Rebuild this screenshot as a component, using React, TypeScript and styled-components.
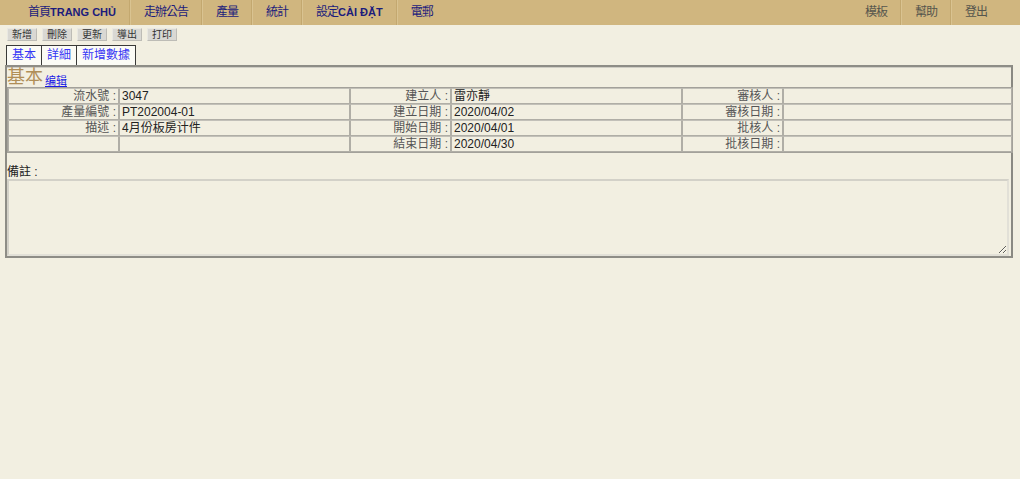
import React from "react";
import styled, { createGlobalStyle } from "styled-components";

const GlobalStyle = createGlobalStyle`
  body {
    margin: 0;
    background: #f2efe1;
    font-family: "Liberation Sans", Arial, "Noto Sans CJK TC", sans-serif;
    font-size: 12px;
    color: #222;
  }
`;

const Header = styled.header`
  height: 25px;
  background: #d0b67f;
  display: flex;
  justify-content: space-between;
  padding: 0 20px 0 14px;
`;

const NavGroup = styled.nav`
  display: flex;
`;

const NavItem = styled.a<{ $muted?: boolean }>`
  display: flex;
  align-items: center;
  padding: 0 13px 0 14px;
  line-height: 25px;
  font-family: "Liberation Serif", "Noto Sans CJK TC", serif;
  font-size: 12px;
  letter-spacing: -1px;
  color: ${(p) => (p.$muted ? "#55554d" : "#1c1c7c")};
  text-decoration: none;
  border-right: 1px solid #c3a86f;
  box-shadow: 1px 0 0 #d9c391;
  &:last-child {
    border-right: none;
    box-shadow: none;
  }
`;

const Latin = styled.b`
  font-family: "Liberation Sans", Arial, sans-serif;
  font-size: 11px;
  letter-spacing: 0;
`;

const Toolbar = styled.div`
  display: flex;
  gap: 5px;
  padding: 3px 0 0 7px;
`;

const ToolButton = styled.button`
  width: 30px;
  height: 13px;
  padding: 0;
  font-family: "Liberation Sans", "Noto Sans CJK TC", sans-serif;
  font-size: 10px;
  line-height: 11px;
  color: #333;
  background: #d9d8d3;
  border: 1px solid #e9e8e2;
  border-right-color: #bdbcb6;
  border-bottom-color: #bdbcb6;
`;

const Tabs = styled.div`
  display: flex;
  padding: 4px 0 0 6px;
`;

const Tab = styled.a`
  height: 19px;
  line-height: 19px;
  padding: 0 5px;
  font-size: 12px;
  color: #3535f5;
  text-decoration: none;
  background: #fbfbf5;
  border: 1px solid #3a3a38;
  border-bottom: none;
  & + & {
    margin-left: -1px;
  }
`;

const Panel = styled.section`
  margin: 0 7px 0 5px;
  border: 2px solid #8e8d86;
  border-right-color: #8a8982;
  box-shadow: inset 0 1px 0 #cfcdc4;
`;

const TitleRow = styled.div`
  display: flex;
  align-items: flex-end;
  height: 20px;
  gap: 2px;
`;

const Title = styled.h2`
  margin: 0;
  font-family: "Liberation Serif", "Noto Sans CJK TC", serif;
  font-weight: normal;
  font-size: 18px;
  line-height: 20px;
  color: #b08e57;
`;

const EditLink = styled.a`
  font-size: 11px;
  line-height: 14px;
  color: #1a1ae6;
  text-decoration: underline;
  margin-bottom: -1px;
`;

const InfoTable = styled.table`
  width: 100%;
  border-collapse: separate;
  border-spacing: 0;
  border: 1px solid #a3a19a;
  table-layout: fixed;
`;

const Cell = styled.td<{ $label?: boolean }>`
  height: 14px;
  padding: 0 2px;
  border: 1px solid #b0aea6;
  border-top-color: #c2c0b8;
  font-size: 12px;
  line-height: 14px;
  white-space: nowrap;
  text-align: ${(p) => (p.$label ? "right" : "left")};
  color: ${(p) => (p.$label ? "#555" : "#222")};
`;

const NoteLabel = styled.div`
  margin-top: 12px;
  font-size: 12px;
  line-height: 14px;
  color: #222;
`;

const NoteArea = styled.textarea`
  display: block;
  box-sizing: border-box;
  width: calc(100% - 2px);
  height: 77px;
  margin: 0;
  background: transparent;
  border: 2px solid #d3d1c8;
  border-right-color: #e2e0d7;
  border-bottom-color: #e2e0d7;
`;

const rows: [string, string, string, string, string, string][] = [
  ["流水號 :", "3047", "建立人 :", "雷亦靜", "審核人 :", ""],
  ["產量編號 :", "PT202004-01", "建立日期 :", "2020/04/02", "審核日期 :", ""],
  ["描述 :", "4月份板房计件", "開始日期 :", "2020/04/01", "批核人 :", ""],
  ["", "", "結束日期 :", "2020/04/30", "批核日期 :", ""],
];

const widths = [111, 231, 101, 231, 101, 229];

export default function App() {
  return (
    <>
      <GlobalStyle />
      <Header>
        <NavGroup>
          <NavItem href="#">首頁<Latin>TRANG CHỦ</Latin></NavItem>
          <NavItem href="#">走辦公告</NavItem>
          <NavItem href="#">產量</NavItem>
          <NavItem href="#">統計</NavItem>
          <NavItem href="#">設定<Latin>CÀI ĐẶT</Latin></NavItem>
          <NavItem href="#">電郵</NavItem>
        </NavGroup>
        <NavGroup>
          <NavItem $muted href="#">模板</NavItem>
          <NavItem $muted href="#">幫助</NavItem>
          <NavItem $muted href="#">登出</NavItem>
        </NavGroup>
      </Header>
      <Toolbar>
        {["新增", "刪除", "更新", "導出", "打印"].map((t) => (
          <ToolButton key={t}>{t}</ToolButton>
        ))}
      </Toolbar>
      <Tabs>
        <Tab href="#">基本</Tab>
        <Tab href="#">詳細</Tab>
        <Tab href="#">新增數據</Tab>
      </Tabs>
      <Panel>
        <TitleRow>
          <Title>基本</Title>
          <EditLink href="#">编辑</EditLink>
        </TitleRow>
        <InfoTable>
          <colgroup>
            {widths.map((w, i) => (
              <col key={i} style={{ width: w }} />
            ))}
          </colgroup>
          <tbody>
            {rows.map((r, i) => (
              <tr key={i}>
                {r.map((c, j) => (
                  <Cell key={j} $label={j % 2 === 0}>{c}</Cell>
                ))}
              </tr>
            ))}
          </tbody>
        </InfoTable>
        <NoteLabel>備註 :</NoteLabel>
        <NoteArea />
      </Panel>
    </>
  );
}
